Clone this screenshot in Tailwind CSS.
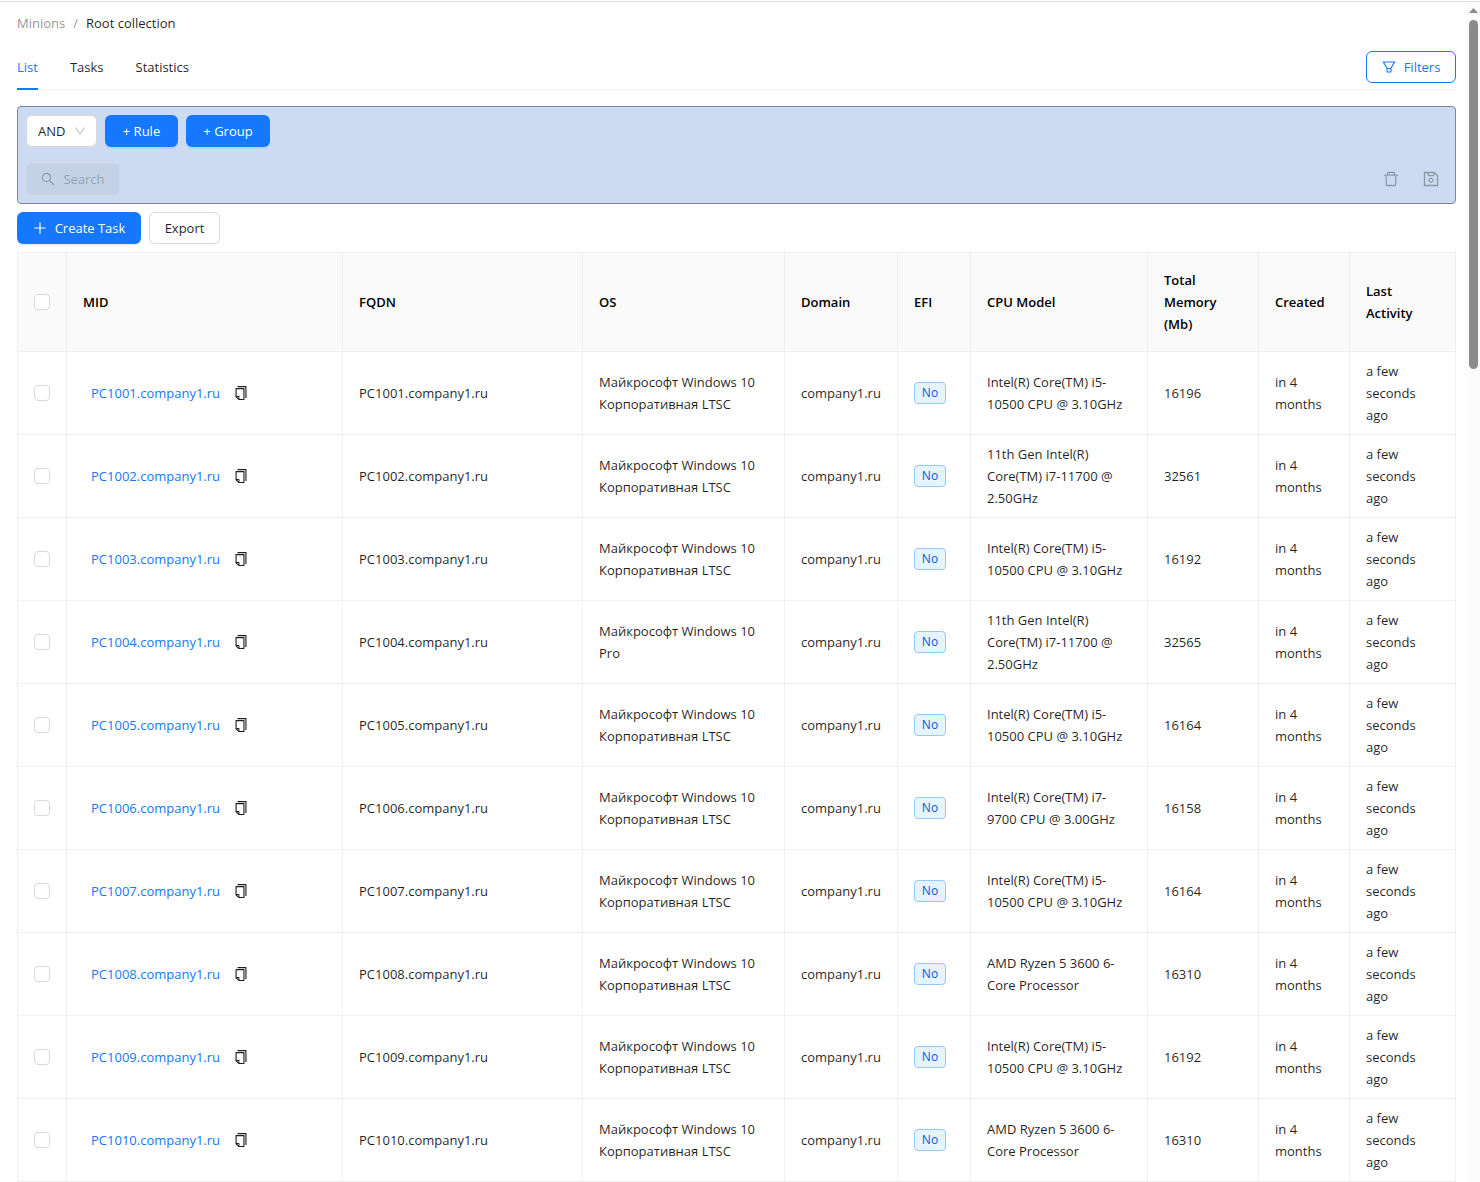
<!DOCTYPE html>
<html lang="en">
<head>
<meta charset="utf-8">
<meta name="viewport" content="width=device-width, initial-scale=1">
<title>Root collection</title>
<script src="https://cdn.jsdelivr.net/npm/@tailwindcss/browser@4"></script>
</head>
<body class="bg-white font-['Open_Sans','Noto_Sans',sans-serif] text-[13px] leading-[22px] text-black/88">
<svg class="hidden" aria-hidden="true">
  <symbol id="plus" viewBox="64 64 896 896"><path d="M482 152h60q8 0 8 8v704q0 8-8 8h-60q-8 0-8-8V160q0-8 8-8z"/><path d="M192 474h672q8 0 8 8v60q0 8-8 8H160q-8 0-8-8v-60q0-8 8-8z"/></symbol>
  <symbol id="search" viewBox="64 64 896 896"><path d="M909.6 854.5L649.9 594.8C690.2 542.7 712 479 712 412c0-80.2-31.3-155.4-87.9-212.1-56.6-56.7-132-87.9-212.1-87.9s-155.5 31.3-212.1 87.9C143.2 256.5 112 331.8 112 412c0 80.1 31.3 155.5 87.9 212.1C256.5 680.8 331.8 712 412 712c67 0 130.6-21.8 182.7-62l259.7 259.6a8.2 8.2 0 0011.6 0l43.6-43.5a8.2 8.2 0 000-11.6zM570.4 570.4C528 612.7 471.8 636 412 636s-116-23.3-158.4-65.6C211.3 528 188 471.8 188 412s23.3-116.1 65.6-158.4C296 211.3 352.2 188 412 188s116.1 23.2 158.4 65.6S636 352.2 636 412s-23.3 116.1-65.6 158.4z"/></symbol>
  <symbol id="down" viewBox="64 64 896 896"><path d="M884 256h-75c-5.1 0-9.9 2.5-12.9 6.6L512 654.2 227.9 262.6c-3-4.1-7.8-6.6-12.9-6.6h-75c-6.5 0-10.3 7.4-6.5 12.7l352.6 486.1c12.8 17.6 39 17.6 51.7 0l352.6-486.1c3.9-5.3.1-12.7-6.4-12.7z"/></symbol>
  <symbol id="trash" viewBox="64 64 896 896"><path d="M360 184h-8c4.4 0 8-3.6 8-8v8h304v-8c0 4.4 3.6 8 8 8h-8v72h72v-80c0-35.3-28.7-64-64-64H352c-35.3 0-64 28.7-64 64v80h72v-72zm504 72H160c-17.7 0-32 14.3-32 32v32c0 4.4 3.6 8 8 8h60.4l24.7 523c1.6 34.1 29.8 61 63.9 61h454c34.2 0 62.3-26.8 63.9-61l24.7-523H888c4.4 0 8-3.6 8-8v-32c0-17.7-14.3-32-32-32zM731.3 840H292.7l-24.2-512h487l-24.2 512z"/></symbol>
  <symbol id="save" viewBox="64 64 896 896"><path d="M893.3 293.3L730.7 130.7c-7.5-7.5-16.7-13-26.7-16V112H144c-17.7 0-32 14.3-32 32v736c0 17.7 14.3 32 32 32h736c17.7 0 32-14.3 32-32V338.5c0-17-6.7-33.2-18.7-45.2zM384 184h256v104H384V184zm456 656H184V184h136v136c0 17.7 14.3 32 32 32h320c17.7 0 32-14.3 32-32V205.8l136 136V840zM512 442c-79.5 0-144 64.5-144 144s64.5 144 144 144 144-64.5 144-144-64.5-144-144-144zm0 224c-44.2 0-80-35.8-80-80s35.8-80 80-80 80 35.8 80 80-35.8 80-80 80z"/></symbol>
  <symbol id="filter" viewBox="64 64 896 896"><path d="M880.1 154H143.9c-24.5 0-39.8 26.7-27.5 48L349 597.4V838c0 17.7 14.2 32 31.8 32h262.4c17.6 0 31.8-14.3 31.8-32V597.4L907.7 202c12.2-21.3-3.1-48-27.6-48zM603.4 798H420.6V642h182.9v156zm9.6-236.6l-9.5 16.6h-183l-9.5-16.6L212.7 226h598.6L613 561.4z"/></symbol>
  <symbol id="copy" viewBox="64 64 896 896"><path d="M832 64H296c-4.4 0-8 3.6-8 8v56c0 4.4 3.6 8 8 8h496v688c0 4.4 3.6 8 8 8h56c4.4 0 8-3.6 8-8V96c0-17.7-14.3-32-32-32zM704 192H192c-17.7 0-32 14.3-32 32v530.7c0 8.5 3.4 16.6 9.4 22.6l173.3 173.3c2.2 2.2 4.7 4 7.4 5.5v1.9h4.2c3.5 1.3 7.2 2 11 2H704c17.7 0 32-14.3 32-32V224c0-17.7-14.3-32-32-32zM350 856.2L263.9 770H350v86.2zM664 888H414V746c0-22.1-17.9-40-40-40H232V264h432v624z"/></symbol>
</svg>

<div class="flex pt-px">
  <main class="min-w-0 flex-1 border-t border-[#dedede] pt-[10px] pr-[10px] pl-[17px]">
    <nav aria-label="Breadcrumb" class="flex gap-2">
      <a href="#" class="text-black/45">Minions</a>
      <span class="text-black/45">/</span>
      <span>Root collection</span>
    </nav>

    <div class="mt-[10px] flex items-center justify-between border-b border-[#f0f0f0]">
      <nav aria-label="Sections" class="-mb-px flex gap-8">
        <a href="#" aria-current="page" class="border-b-2 border-[#1677ff] pt-3 pb-[10px] text-[#1677ff]">List</a>
        <a href="#" class="border-b-2 border-transparent pt-3 pb-[10px]">Tasks</a>
        <a href="#" class="border-b-2 border-transparent pt-3 pb-[10px]">Statistics</a>
      </nav>
      <button type="button" class="flex h-8 w-[90px] items-center justify-center gap-2 rounded-md border border-[#1677ff] bg-white text-[#1677ff]">
        <svg class="size-[14px] fill-current"><use href="#filter"/></svg>Filters
      </button>
    </div>

    <form class="mt-4 rounded border border-[#8081a2] bg-[#ccdbf1] p-2">
      <div class="flex gap-2">
        <div class="relative w-[71px]">
          <select aria-label="Combine rules with" class="h-8 w-full appearance-none rounded-md border border-[#d9d9d9] bg-white pl-[11px]">
            <option>AND</option><option>OR</option>
          </select>
          <svg class="pointer-events-none absolute top-[10px] right-[11px] size-3 fill-black/25"><use href="#down"/></svg>
        </div>
        <button type="button" class="h-8 w-[73px] rounded-md bg-[#1677ff] text-white shadow-[0_2px_0_rgba(5,145,255,0.1)]">+ Rule</button>
        <button type="button" class="h-8 w-[84px] rounded-md bg-[#1677ff] text-white shadow-[0_2px_0_rgba(5,145,255,0.1)]">+ Group</button>
      </div>
      <div class="mt-4 flex gap-2">
        <button type="submit" disabled class="mr-auto flex h-8 w-[94px] items-center justify-center gap-2 rounded-md border border-[#d0d3d9] bg-black/4 text-black/25">
          <svg class="size-[14px] fill-current"><use href="#search"/></svg>Search
        </button>
        <button type="button" disabled aria-label="Delete" class="flex size-8 items-center justify-center text-black/30"><svg class="size-4 fill-current"><use href="#trash"/></svg></button>
        <button type="button" disabled aria-label="Save" class="flex size-8 items-center justify-center text-black/30"><svg class="size-4 fill-current"><use href="#save"/></svg></button>
      </div>
    </form>

    <div class="my-2 flex gap-2">
      <button type="button" class="flex h-8 w-[124px] items-center justify-center gap-2 rounded-md bg-[#1677ff] text-white shadow-[0_2px_0_rgba(5,145,255,0.1)]">
        <svg class="size-[14px] fill-current"><use href="#plus"/></svg>Create Task
      </button>
      <button type="button" class="h-8 w-[71px] rounded-md border border-[#d9d9d9] bg-white shadow-[0_2px_0_rgba(0,0,0,0.02)]">Export</button>
    </div>

    <table class="w-full table-fixed border-separate border-spacing-0 border-t border-l border-[#f0f0f0] text-left">
      <colgroup>
        <col class="w-[49px]"><col class="w-[276px]"><col class="w-[240px]"><col class="w-[202px]"><col class="w-[113px]"><col class="w-[73px]"><col class="w-[177px]"><col class="w-[111px]"><col class="w-[91px]"><col class="w-[106px]">
      </colgroup>
      <thead>
        <tr class="bg-[#fafafa] text-black *:border-r *:border-b *:border-[#f0f0f0] *:px-4 *:py-4 *:font-semibold">
          <th scope="col"><input type="checkbox" aria-label="Select all" class="block size-4 appearance-none rounded border border-[#d9d9d9] bg-white"></th>
          <th scope="col">MID</th>
          <th scope="col">FQDN</th>
          <th scope="col">OS</th>
          <th scope="col">Domain</th>
          <th scope="col">EFI</th>
          <th scope="col">CPU Model</th>
          <th scope="col">Total Memory (Mb)</th>
          <th scope="col">Created</th>
          <th scope="col">Last Activity</th>
        </tr>
      </thead>
      <tbody id="rows"></tbody>
    </table>
  </main>

  <div aria-hidden="true" class="flex w-[14px] flex-col items-center border-t border-[#dedede] bg-[#fcfcfc] pt-[6px]">
    <svg class="h-[5px] w-[9px] fill-[#8b8b8b]" viewBox="0 0 9 5"><path d="M4.5 0 9 5H0z"/></svg>
    <div class="mt-[7px] h-[349px] w-[9px] rounded-full bg-[#8b8b8b]"></div>
  </div>
</div>

<script>
const LTSC = 'Майкрософт Windows 10 Корпоративная LTSC';
const PRO = 'Майкрософт Windows 10 Pro';
const I5 = 'Intel(R) Core(TM) i5-10500 CPU @ 3.10GHz';
const I7 = '11th Gen Intel(R) Core(TM) i7-11700 @ 2.50GHz';
const I7_9 = 'Intel(R) Core(TM) i7-9700 CPU @ 3.00GHz';
const RYZEN = 'AMD Ryzen 5 3600 6-Core Processor';
const minions = [
  [1001, LTSC, I5, 16196], [1002, LTSC, I7, 32561], [1003, LTSC, I5, 16192],
  [1004, PRO, I7, 32565], [1005, LTSC, I5, 16164], [1006, LTSC, I7_9, 16158],
  [1007, LTSC, I5, 16164], [1008, LTSC, RYZEN, 16310], [1009, LTSC, I5, 16192],
  [1010, LTSC, RYZEN, 16310],
];
document.getElementById('rows').innerHTML = minions.map(([id, os, cpu, mem]) => `
  <tr class="*:border-r *:border-b *:border-[#f0f0f0] *:px-4 *:py-2">
    <td><input type="checkbox" aria-label="Select PC${id}" class="block size-4 appearance-none rounded border border-[#d9d9d9] bg-white"></td>
    <td><div class="flex items-center gap-[14px] pl-2">
      <a href="#" class="text-[#1677ff]">PC${id}.company1.ru</a>
      <button type="button" aria-label="Copy"><svg class="size-[14px] fill-current"><use href="#copy"/></svg></button>
    </div></td>
    <td>PC${id}.company1.ru</td>
    <td>${os}</td>
    <td>company1.ru</td>
    <td><span class="flex h-[22px] w-8 items-center justify-center rounded border border-[#91caff] bg-[#e6f4ff] text-xs text-[#0958d9]">No</span></td>
    <td>${cpu}</td>
    <td>${mem}</td>
    <td>in 4 months</td>
    <td>a few seconds ago</td>
  </tr>`).join('');
</script>
</body>
</html>
